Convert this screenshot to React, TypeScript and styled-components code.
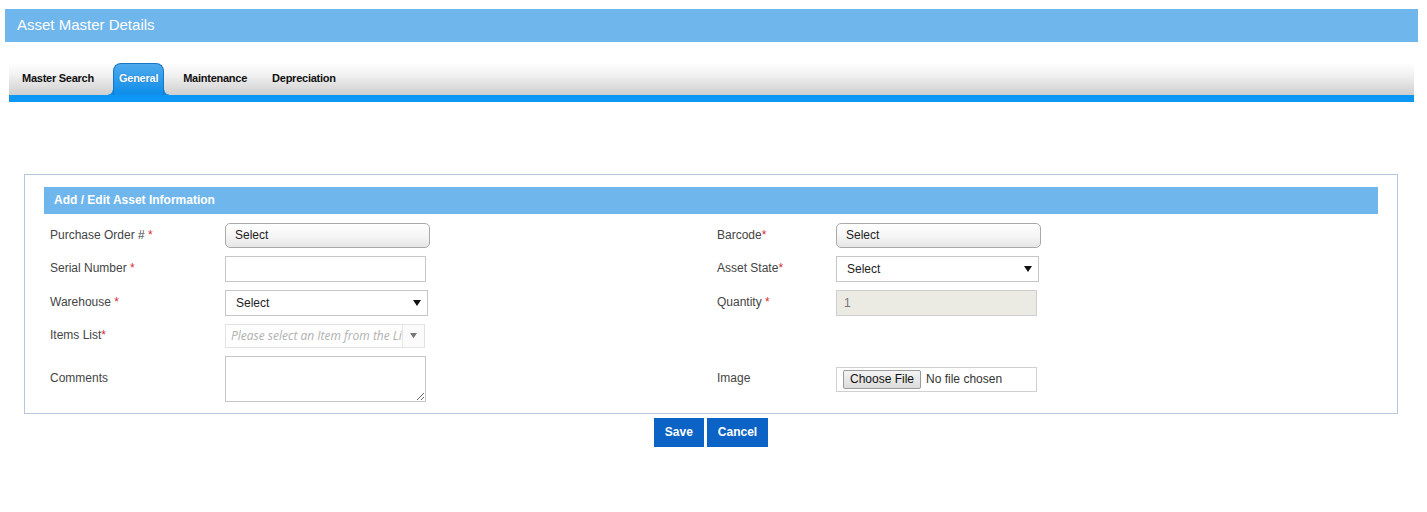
import React from 'react'
import styled, { createGlobalStyle } from 'styled-components'

const GlobalStyle = createGlobalStyle`
  body {
    margin: 0;
    background: #fff;
    font-family: "Liberation Sans", Arial, sans-serif;
  }
`

const tabs = ['Master Search', 'General', 'Maintenance', 'Depreciation']

const Req = () => <Star>*</Star>

const Arrow = ({ color = '#111', size = 8 }: { color?: string; size?: number }) => (
  <svg width={size} height={size * 0.75} viewBox="0 0 8 6">
    <path d="M0 0 L8 0 L4 6 Z" fill={color} />
  </svg>
)

const App = () => {
  return (
    <>
      <GlobalStyle />
      <PageHeader>Asset Master Details</PageHeader>

      <TabStrip>
        {tabs.map((t) => (
          <Tab key={t} active={t === 'General'}>
            {t}
          </Tab>
        ))}
      </TabStrip>

      <Panel>
        <PanelHeader>Add / Edit Asset Information</PanelHeader>
        <FormGrid>
          <Label>
            Purchase Order # <Req />
          </Label>
          <Cell>
            <SelectButton>Select</SelectButton>
          </Cell>
          <Label>
            Barcode<Req />
          </Label>
          <Cell>
            <SelectButton>Select</SelectButton>
          </Cell>

          <Label>
            Serial Number <Req />
          </Label>
          <Cell>
            <TextBox />
          </Cell>
          <Label>
            Asset State<Req />
          </Label>
          <Cell>
            <DropDown width={203}>
              <span>Select</span>
              <Arrow />
            </DropDown>
          </Cell>

          <Label>
            Warehouse <Req />
          </Label>
          <Cell>
            <DropDown width={203}>
              <span>Select</span>
              <Arrow />
            </DropDown>
          </Cell>
          <Label>
            Quantity <Req />
          </Label>
          <Cell>
            <ReadOnlyBox>1</ReadOnlyBox>
          </Cell>

          <Label>
            Items List<Req />
          </Label>
          <Cell>
            <ChosenBox>
              <Placeholder>Please select an Item from the List</Placeholder>
              <ChosenArrow>
                <Arrow color="#777" size={7} />
              </ChosenArrow>
            </ChosenBox>
          </Cell>
          <Label />
          <Cell />

          <Label>Comments</Label>
          <Cell>
            <TextArea />
          </Cell>
          <Label>Image</Label>
          <Cell>
            <FileBox>
              <FileButton type="button">Choose File</FileButton>
              <span>No file chosen</span>
            </FileBox>
          </Cell>
        </FormGrid>
      </Panel>

      <Actions>
        <ActionButton>Save</ActionButton>
        <ActionButton>Cancel</ActionButton>
      </Actions>
    </>
  )
}

const PageHeader = styled.div`
  margin: 9px 9px 0 5px;
  height: 33px;
  line-height: 31px;
  padding-left: 12px;

  font-size: 15px;
  color: #fff;

  background: #6fb6ec;
`

const TabStrip = styled.div`
  display: flex;
  gap: 13px;

  margin: 21px 13px 0 9px;
  height: 32px;
  padding-left: 7px;

  background: linear-gradient(#ffffff 0%, #f2f2f2 35%, #cfcfcf 100%);
  border-bottom: 7px solid #0b97f3;
`

const Tab = styled.div<{ active?: boolean }>`
  position: relative;
  display: flex;
  align-items: center;

  padding: 0 6px 3px;

  font-size: 11px;
  font-weight: bold;
  letter-spacing: -0.25px;
  color: ${(p) => (p.active ? '#fff' : '#111')};

  ${(p) =>
    p.active &&
    `
    padding: 0 5px 3px;
    background: linear-gradient(#4eaaee, #0d8de9);
    border: 1px solid #1677c4;
    border-bottom: none;
    border-radius: 8px 8px 0 0;
    text-shadow: 0 0 1px rgba(0, 60, 120, 0.5);

    &::before, &::after {
      content: '';
      position: absolute;
      bottom: 0;
      width: 5px;
      height: 5px;
    }
    &::before {
      left: -6px;
      background: radial-gradient(circle at 0 0, transparent 4px, #0d8de9 5px);
    }
    &::after {
      right: -6px;
      background: radial-gradient(circle at 100% 0, transparent 4px, #0d8de9 5px);
    }
  `}
`

const Panel = styled.div`
  margin: 72px 29px 0 24px;
  padding: 12px 19px 11px;

  border: 1px solid #b5c7d9;
`

const PanelHeader = styled.div`
  height: 27px;
  line-height: 27px;
  padding-left: 10px;

  font-size: 12px;
  font-weight: bold;
  color: #fff;

  background: #6fb6ec;
`

const FormGrid = styled.div`
  display: grid;
  grid-template-columns: 181px 486px 125px 1fr;
  grid-template-rows: 25px 26px 26px 24px 46px;
  row-gap: 8px;
  align-items: center;

  margin-top: 9px;
`

const Label = styled.div`
  padding-left: 6px;
  margin-top: -2px;

  font-size: 12px;
  color: #444;
`

const Star = styled.span`
  color: #d32f2f;
`

const Cell = styled.div`
  display: flex;
  align-items: center;
  height: 100%;
`

const SelectButton = styled.div`
  box-sizing: border-box;
  width: 205px;
  height: 25px;
  line-height: 23px;
  padding-left: 9px;

  font-size: 12px;
  color: #222;

  border: 1px solid #a9a9a9;
  border-radius: 5px;
  background: linear-gradient(#ffffff 0%, #f6f6f6 50%, #e6e6e6 100%);
  box-shadow: inset 0 1px 0 #fff;
`

const TextBox = styled.div`
  box-sizing: border-box;
  width: 201px;
  height: 26px;

  border: 1px solid #c6c6c6;
  background: #fff;
`

const DropDown = styled.div<{ width: number }>`
  box-sizing: border-box;
  display: flex;
  align-items: center;
  justify-content: space-between;

  width: ${(p) => p.width}px;
  height: 26px;
  padding: 0 6px 0 10px;

  font-size: 12px;
  color: #222;

  border: 1px solid #c6c6c6;
  background: #fff;
`

const ReadOnlyBox = styled.div`
  box-sizing: border-box;
  width: 201px;
  height: 26px;
  line-height: 24px;
  padding-left: 7px;

  font-size: 12px;
  color: #777;

  border: 1px solid #cfcfcf;
  background: #ebebe4;
`

const ChosenBox = styled.div`
  box-sizing: border-box;
  display: flex;

  width: 200px;
  height: 24px;

  border: 1px solid #e2e2e2;
  background: #fff;
`

const Placeholder = styled.div`
  flex: 1;
  overflow: hidden;
  white-space: nowrap;

  padding-left: 5px;
  line-height: 22px;

  font-family: "Open Sans", sans-serif;
  font-size: 12px;
  font-style: italic;
  color: #b0b0b0;
`

const ChosenArrow = styled.div`
  display: flex;
  align-items: center;
  justify-content: center;

  width: 21px;

  border-left: 1px solid #e6e6e6;
  background: #fbfbfb;
`

const TextArea = styled.textarea`
  box-sizing: border-box;
  width: 201px;
  height: 46px;
  margin: 0;

  border: 1px solid #c6c6c6;
  font-family: "Liberation Sans", Arial, sans-serif;
`

const FileBox = styled.div`
  box-sizing: border-box;
  display: flex;
  align-items: center;
  gap: 5px;

  width: 201px;
  height: 25px;
  padding-left: 6px;

  font-size: 12px;
  color: #333;

  border: 1px solid #cfcfcf;
`

const FileButton = styled.button`
  height: 19px;
  padding: 0 6px;

  font-family: "Liberation Sans", Arial, sans-serif;
  font-size: 12px;
  color: #111;

  border: 1px solid #9a9a9a;
  border-radius: 2px;
  background: linear-gradient(#f4f4f4, #dcdcdc);
`

const Actions = styled.div`
  display: flex;
  justify-content: center;
  gap: 3px;

  margin: 4px 29px 0 24px;
`

const ActionButton = styled.div`
  height: 29px;
  line-height: 29px;
  padding: 0 11px;

  font-size: 12px;
  font-weight: bold;
  color: #fff;

  background: #0b63c5;
`

export default App
